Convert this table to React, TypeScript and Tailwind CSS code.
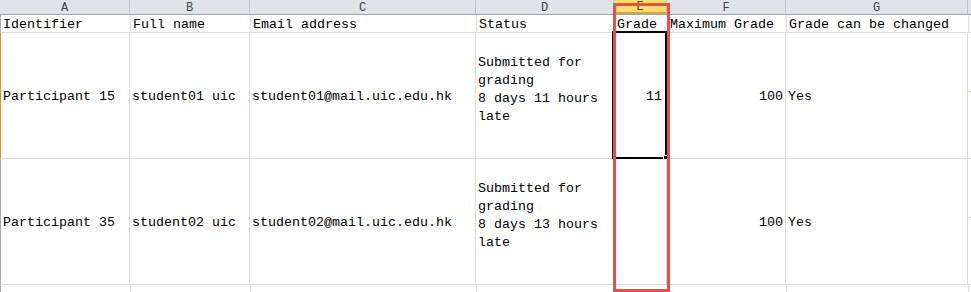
const cols = [
  { key: "A", w: "w-[130px]" },
  { key: "B", w: "w-[120px]" },
  { key: "C", w: "w-[226px]" },
  { key: "D", w: "w-[138px]" },
  { key: "E", w: "w-[53px]" },
  { key: "F", w: "w-[119px]" },
  { key: "G", w: "w-[182px]" },
  { key: "H", w: "w-[60px]" },
];

const head = [
  "Identifier",
  "Full name",
  "Email address",
  "Status",
  "Grade",
  "Maximum Grade",
  "Grade can be changed",
  "Last modified (submission)",
];

const rows = [
  {
    id: "Participant 15",
    name: "student01 uic",
    email: "student01@mail.uic.edu.hk",
    status: ["Submitted for", "grading", "8 days 11 hours", "late"],
    grade: "11",
    max: "100",
    change: "Yes",
    last: "Tuesday",
  },
  {
    id: "Participant 35",
    name: "student02 uic",
    email: "student02@mail.uic.edu.hk",
    status: ["Submitted for", "grading", "8 days 13 hours", "late"],
    grade: "",
    max: "100",
    change: "Yes",
    last: "Tuesday",
  },
];

const cell = "shrink-0 border-r border-[#dadcdd] whitespace-nowrap";

const App = () => {
  return (
    <div className="relative w-[971px] h-[292px] overflow-hidden bg-white font-['Liberation_Mono',monospace] text-[13.33px] text-black">
      {/* column letters */}
      <div className="flex h-[15px] bg-[#e0e3e8] border-b border-[#9da3ab]">
        {cols.map((c) => (
          <div
            key={c.key}
            className={`${c.w} shrink-0 border-r border-[#c2c6cc] flex items-center justify-center pt-[1px] text-[12px] leading-none text-[#444] ${
              c.key === "E" ? "bg-[#f7dd72] border-b-2 border-b-[#e1a43a]" : ""
            }`}
          >
            {c.key}
          </div>
        ))}
      </div>

      {/* header row */}
      <div className="flex h-[18px] border-b border-[#dadcdd] border-l border-l-[#a9adb3]">
        {head.map((h, i) => (
          <div key={h} className={`${cols[i].w} ${cell} overflow-hidden pl-[2px] pt-[2px] leading-[16px]`}>
            {h}
          </div>
        ))}
      </div>

      {rows.map((r, ri) => (
        <div
          key={r.id}
          className={`flex h-[126px] border-b border-[#dadcdd] border-l ${
            ri === 0 ? "border-l-[#d9922e]" : "border-l-[#a9adb3]"
          }`}
        >
          <div className={`w-[129px] ${cell} flex items-center pl-[2px] pt-[3px]`}>{r.id}</div>
          <div className={`w-[120px] ${cell} flex items-center pl-[2px] pt-[3px]`}>{r.name}</div>
          <div className={`w-[226px] ${cell} flex items-center pl-[2px] pt-[3px]`}>{r.email}</div>
          <div className={`w-[138px] ${cell} flex flex-col justify-center pl-[2px] pb-[12px] leading-[18px]`}>
            {r.status.map((s) => (
              <span key={s}>{s}</span>
            ))}
          </div>
          <div className={`w-[53px] ${cell} flex items-center justify-end pr-[4px] pt-[3px]`}>{r.grade}</div>
          <div className={`w-[119px] ${cell} flex items-center justify-end pr-[2px] pt-[3px]`}>{r.max}</div>
          <div className={`w-[182px] ${cell} flex items-center pl-[2px] pt-[3px]`}>{r.change}</div>
          <div className={`w-[60px] ${cell} overflow-hidden flex items-center pl-[2px] pt-[3px]`}>{r.last}</div>
        </div>
      ))}
      <div className="flex h-[10px] border-l border-l-[#a9adb3]">
        {cols.map((c) => (
          <div key={c.key} className={`${c.w} ${cell}`} />
        ))}
      </div>

      {/* active cell E2 */}
      <div className="absolute left-[612px] top-[31px] w-[55px] h-[128px] border-2 border-black">
        <div className="absolute -right-[3px] -bottom-[3px] w-[5px] h-[5px] bg-black border border-white" />
      </div>

      {/* red highlight around column E */}
      <div className="absolute left-[613px] top-[3px] w-[57px] h-[289px] border-[3px] border-[#ee4b4b]" />
    </div>
  );
};

export default App;
